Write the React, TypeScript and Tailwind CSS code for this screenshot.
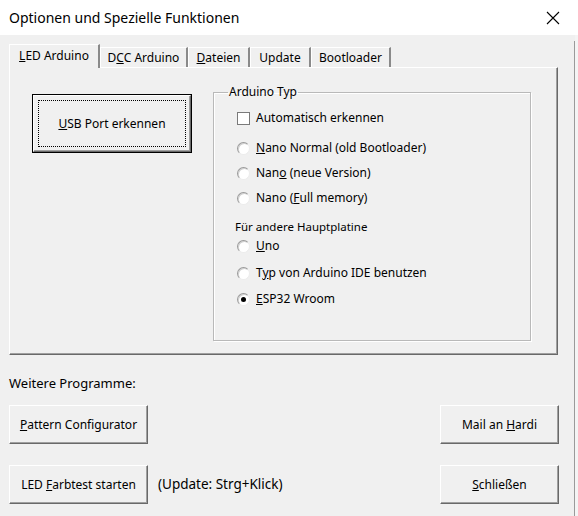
import React from "react";

const font = "font-['Segoe_UI','Noto_Sans','Open_Sans',sans-serif]";

function Btn({
  children,
  className = "",
}: {
  children: React.ReactNode;
  className?: string;
}) {
  return (
    <div
      className={[
        "flex items-center justify-center bg-[#f0f0f0] text-[12px] text-black",
        "border border-t-white border-l-white border-r-[#696969] border-b-[#696969]",
        "shadow-[inset_-1px_-1px_0_#a0a0a0]",
        className,
      ].join(" ")}
    >
      {children}
    </div>
  );
}

function Radio({ checked = false }: { checked?: boolean }) {
  return (
    <span className="flex items-center justify-center w-[13px] h-[13px] rounded-full bg-white border border-t-[#9a9a9a] border-l-[#9a9a9a] border-r-[#ececec] border-b-[#ececec] shadow-[inset_1px_1px_0_#d0d0d0]">
      {checked && <span className="w-[5px] h-[5px] rounded-full bg-black" />}
    </span>
  );
}

function Row({
  children,
  control,
  className = "",
}: {
  children: React.ReactNode;
  control: React.ReactNode;
  className?: string;
}) {
  return (
    <div className={["flex items-center h-[20px]", className].join(" ")}>
      {control}
      <span className="ml-[6px] text-[12px] text-black">{children}</span>
    </div>
  );
}

const tabs = [
  { label: <><u>L</u>ED Arduino</>, w: "w-[91px]", active: true },
  { label: <>D<u>C</u>C Arduino</>, w: "w-[88px]" },
  { label: <><u>D</u>ateien</>, w: "w-[62px]" },
  { label: <>Update</>, w: "w-[61px]" },
  { label: <>Bootloader</>, w: "w-[80px]" },
];

export default function App() {
  return (
    <div className={`w-[578px] h-[516px] bg-[#f0f0f0] flex flex-col overflow-hidden ${font}`}>
      <div className="h-[35px] bg-white flex items-center justify-between pl-[9px] pr-[18px]">
        <span className="text-[14px] text-black">Optionen und Spezielle Funktionen</span>
        <svg width="14" height="14" viewBox="0 0 14 14" className="text-black">
          <path d="M1 1L13 13M13 1L1 13" stroke="currentColor" strokeWidth="1.1" fill="none" />
        </svg>
      </div>

      <div className="flex flex-1">
        <div className="w-[574px] px-[9px] flex flex-col">
          {/* tabs */}
          <div className="flex items-end mt-[9px] h-[23px] relative z-10">
            {tabs.map((t, i) => (
              <div
                key={i}
                className={[
                  "flex items-center justify-center text-[12px] text-black bg-[#f0f0f0]",
                  "border-t border-l border-t-white border-l-white border-r-2 border-r-[#8a8a8a]",
                  t.w,
                  t.active ? "h-[24px] -mb-[1px] pb-[2px]" : "h-[20px]",
                ].join(" ")}
              >
                <span>{t.label}</span>
              </div>
            ))}
          </div>

          {/* panel */}
          <div className="w-[549px] h-[288px] border border-t-white border-l-white border-r-[#696969] border-b-[#696969] shadow-[inset_-1px_-1px_0_#a0a0a0] flex">
            <div className="ml-[22px] mt-[26px] w-[160px] h-[59px] border border-black">
              <Btn className="w-full h-full">
                <div className="w-[148px] h-[47px] border border-dotted border-black flex items-center justify-center">
                  <span><u>U</u>SB Port erkennen</span>
                </div>
              </Btn>
            </div>

            <fieldset className="ml-[21px] mt-[16px] w-[318px] h-[257px] border border-[#b9b9b9] shadow-[1px_1px_0_white,inset_1px_1px_0_white] px-[23px] pt-[8px]">
              <legend className="-ml-[9px] px-[1px] text-[12px] leading-[16px] text-black">
                Arduino Typ
              </legend>
              <Row
                control={
                  <span className="w-[13px] h-[13px] bg-white border border-[#7a7a7a]" />
                }
              >
                Automatisch erkennen
              </Row>
              <Row control={<Radio />} className="mt-[10px]">
                <u>N</u>ano Normal (old Bootloader)
              </Row>
              <Row control={<Radio />} className="mt-[5px]">
                Nan<u>o</u> (neue Version)
              </Row>
              <Row control={<Radio />} className="mt-[5px]">
                Nano (<u>F</u>ull memory)
              </Row>
              <div className="h-[18px] mt-[10px] -ml-[2px] flex items-center text-[11.5px] text-black">
                Für andere Hauptplatine
              </div>
              <Row control={<Radio />} className="mt-0">
                <u>U</u>no
              </Row>
              <Row control={<Radio />} className="mt-[7px]">
                T<u>y</u>p von Arduino IDE benutzen
              </Row>
              <Row control={<Radio checked />} className="mt-[6px]">
                <u>E</u>SP32 Wroom
              </Row>
            </fieldset>
          </div>

          <div className="mt-[20px] h-[18px] flex items-center text-[13px] text-black">
            Weitere Programme:
          </div>

          <div className="mt-[12px] flex justify-between">
            <Btn className="w-[139px] h-[39px]">
              <span><u>P</u>attern Configurator</span>
            </Btn>
            <Btn className="w-[119px] h-[39px] mr-[6px]">
              <span>Mail an <u>H</u>ardi</span>
            </Btn>
          </div>

          <div className="mt-[21px] flex justify-between items-center">
            <div className="flex items-center">
              <Btn className="w-[139px] h-[39px]">
                <span>LED <u>F</u>arbtest starten</span>
              </Btn>
              <span className="ml-[10px] text-[13.5px] text-black">(Update: Strg+Klick)</span>
            </div>
            <Btn className="w-[119px] h-[39px] mr-[6px]">
              <span><u>S</u>chließen</span>
            </Btn>
          </div>
        </div>
        <div className="w-px bg-[#9a9a9a] mt-[6px]" />
        <div className="flex-1 bg-[#f4f4f4]" />
      </div>
    </div>
  );
}
